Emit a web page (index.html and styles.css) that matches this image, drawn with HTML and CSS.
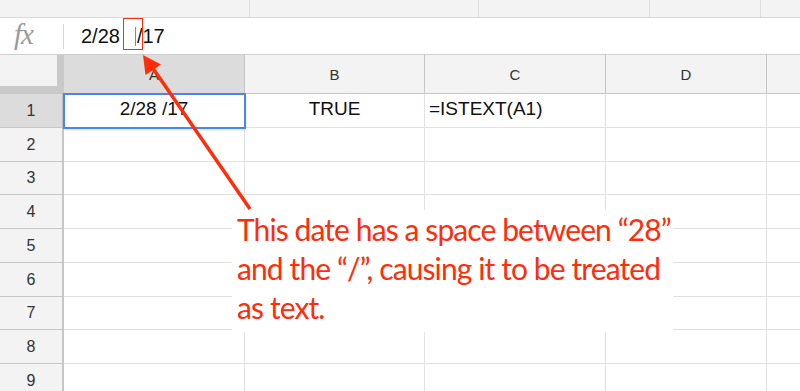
FILE: index.html
```html
<!DOCTYPE html>
<html>
	<head>
		<title>ISTEXT date example</title>
		<meta name="viewport" content="width=device-width, initial-scale=1" />
		<link rel="stylesheet" href="styles.css">
	</head>
	<body>
		<div class="page">
			<div class="toolbar">
				<div class="tb-cell" style="width: 250px"></div>
				<div class="tb-cell" style="width: 229px"></div>
				<div class="tb-cell" style="width: 171px"></div>
				<div class="tb-cell" style="width: 111px"></div>
				<div class="tb-cell tb-last"></div>
			</div>

			<div class="formula-bar">
				<span class="fx">fx</span>
				<span class="fx-sep"></span>
				<span class="formula">2/28<span class="cursor"></span>/17</span>
			</div>

			<div class="sheet">
				<div class="corner"></div>
				<div class="col-head selected">A</div>
				<div class="col-head">B</div>
				<div class="col-head">C</div>
				<div class="col-head">D</div>
				<div class="col-head last"></div>

				<div class="row-head selected">1</div>
				<div class="cell center active">2/28 /17</div>
				<div class="cell center">TRUE</div>
				<div class="cell">=ISTEXT(A1)</div>
				<div class="cell"></div>
				<div class="cell last"></div>
			</div>

			<!-- annotation layer -->
			<div class="mark"></div>
			<svg class="arrow" width="800" height="391" viewBox="0 0 800 391">
				<line x1="150" y1="64" x2="250" y2="209" stroke="#ff2d0a" stroke-width="3.5" />
				<polygon points="143,55 161,64.5 145.5,75" fill="#ff2d0a" />
			</svg>
			<div class="note">
				This date has a space between “28”<br>
				and the “/”, causing it to be treated<br>
				as text.
			</div>
		</div>

		<script>
			// rows 2-9 are empty, build them here
			const sheet = document.querySelector(".sheet");
			for (let r = 2; r <= 9; r++) {
				let html = '<div class="row-head">' + r + "</div>";
				for (let c = 0; c < 4; c++) {
					html += '<div class="cell"></div>';
				}
				html += '<div class="cell last"></div>';
				sheet.insertAdjacentHTML("beforeend", html);
			}
		</script>
	</body>
</html>
```

FILE: styles.css
```css
body {
	margin: 0;
	font-family: "Liberation Sans", Arial, sans-serif;
	background-color: white;
}
.page {
	position: relative;
	width: 800px;
	height: 391px;
	overflow: hidden;
}
.toolbar {
	display: flex;
	height: 18px;
	background-color: #f3f3f3;
	border-bottom: 1px solid #d9d9d9;
	box-sizing: border-box;
}
.tb-cell {
	border-right: 1px solid #dedede;
	box-sizing: border-box;
}
.tb-last {
	flex: 1;
	border-right: none;
}
.formula-bar {
	display: flex;
	align-items: center;
	height: 37px;
	border-bottom: 1px solid #cfcfcf;
	box-sizing: border-box;
}
.fx {
	width: 64px;
	padding-left: 14px;
	box-sizing: border-box;
	font-family: "Liberation Serif", serif;
	font-style: italic;
	font-size: 29px;
	color: #9a9a9a;
	letter-spacing: -1px;
	margin-top: -4px;
}
.fx-sep {
	width: 1px;
	height: 25px;
	background-color: #d6d6d6;
	margin-left: -1px;
}
.formula {
	margin-left: 17px;
	font-size: 20px;
	color: #111;
	display: flex;
	align-items: center;
}
.cursor {
	display: inline-block;
	width: 1px;
	height: 19px;
	background-color: #888;
	margin: 0 1px 0 15px;
}
.sheet {
	display: grid;
	grid-template-columns: 64px 181px 180px 181px 161px 1fr;
	grid-template-rows: 39px 34px 34px 33px 34px 34px 34px 33px 34px 34px;
	font-size: 19px;
	color: #111;
}
.corner {
	background-color: #f3f3f3;
	border-right: 7px solid #c9c9c9;
	border-bottom: 8px solid #c9c9c9;
	box-sizing: border-box;
}
.col-head {
	display: flex;
	align-items: center;
	justify-content: center;
	background-color: #f3f3f3;
	border-right: 1px solid #c6c6c6;
	border-bottom: 1px solid #c6c6c6;
	box-sizing: border-box;
	font-size: 15px;
	color: #333;
}
.col-head.last {
	border-right: none;
}
.row-head {
	display: flex;
	align-items: center;
	justify-content: center;
	background-color: #f3f3f3;
	border-right: 2px solid #c6c6c6;
	border-bottom: 1px solid #c6c6c6;
	box-sizing: border-box;
	font-size: 16px;
	color: #333;
}
.selected {
	background-color: #dcdcdc;
}
.cell {
	display: flex;
	align-items: center;
	padding: 0 4px 3px;
	border-right: 1px solid #e1e1e1;
	border-bottom: 1px solid #e1e1e1;
	box-sizing: border-box;
	white-space: nowrap;
}
.cell.center {
	justify-content: center;
}
.cell.last {
	border-right: none;
}
.cell.active {
	outline: 2px solid #4a86f0;
	outline-offset: -1px;
	position: relative;
	box-shadow: 0 1px 3px rgba(0, 0, 0, 0.25);
}
.mark {
	position: absolute;
	left: 123px;
	top: 18px;
	width: 20px;
	height: 32px;
	border: 1.5px solid #ff2d0a;
	box-sizing: border-box;
}
.arrow {
	position: absolute;
	left: 0;
	top: 0;
}
.note {
	position: absolute;
	left: 232px;
	top: 210px;
	width: 441px;
	height: 122px;
	padding-left: 5px;
	box-sizing: border-box;
	background-color: white;
	font-family: Lato, "Noto Sans", sans-serif;
	font-size: 30px;
	letter-spacing: -0.9px;
	line-height: 39px;
	white-space: nowrap;
	color: #ff2d0a;
}
```
